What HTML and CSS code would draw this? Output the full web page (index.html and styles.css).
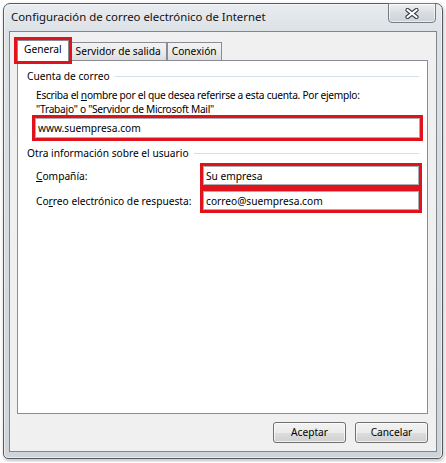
FILE: index.html
```html
<!DOCTYPE html>
<html lang="es">
<head>
  <meta charset="UTF-8" />
  <meta name="viewport" content="width=device-width, initial-scale=1.0" />
  <title>Configuración de correo electrónico de Internet</title>
  <link rel="stylesheet" href="styles.css">
</head>
<body>
  <div class="window">
    <div class="titlebar">
      <span class="title">Configuración de correo electrónico de Internet</span>
      <button class="close" aria-label="Cerrar">
        <svg width="14" height="11" viewBox="0 0 14 11">
          <path d="M2.5 2 L11.5 9 M11.5 2 L2.5 9" stroke="#3a3f45" stroke-width="4.2" stroke-linecap="round" fill="none"/>
          <path d="M2.5 2 L11.5 9 M11.5 2 L2.5 9" stroke="#fff" stroke-width="2.2" stroke-linecap="round" fill="none"/>
        </svg>
      </button>
    </div>

    <div class="client">
      <div class="tabs">
        <div class="tab active marked">General</div>
        <div class="tab">Servidor de salida</div>
        <div class="tab">Conexión</div>
      </div>

      <div class="panel">
        <div class="group-title"><span>Cuenta de correo</span></div>
        <p class="hint">Escriba el <u>n</u>ombre por el que desea referirse a esta cuenta. Por ejemplo:<br>"Trabajo" o "Servidor de Microsoft Mail"</p>
        <input class="field wide marked" type="text" value="www.suempresa.com" />

        <div class="group-title second"><span>Otra información sobre el usuario</span></div>
        <div class="row">
          <label><u>C</u>ompañía:</label>
          <input class="field marked" type="text" value="Su empresa" />
        </div>
        <div class="row">
          <label>Co<u>r</u>reo electrónico de respuesta:</label>
          <input class="field marked" type="text" value="correo@suempresa.com" />
        </div>
      </div>

      <div class="actions">
        <button class="btn">Aceptar</button>
        <button class="btn">Cancelar</button>
      </div>
    </div>
  </div>
</body>
</html>
```

FILE: styles.css
```css
body {
  margin: 0;
  padding: 3px;
  background: #fff;
  font-family: "Noto Sans", "Open Sans", sans-serif;
  font-size: 10.2px;
  color: #000;
}

.window {
  position: relative;
  width: 440px;
  height: 456px;
  box-sizing: border-box;
  display: flex;
  flex-direction: column;
  padding: 0 5px 6px;
  border: 1px solid #555a60;
  border-radius: 7px 7px 5px 5px;
  background: linear-gradient(to bottom, #e9ecf0 0, #dce1e6 28px, #cfd4d9 100%);
  box-shadow: inset 0 0 0 1px rgba(255, 255, 255, 0.55), 1px 2px 4px rgba(0, 0, 0, 0.25);
}

.titlebar {
  height: 27px;
  line-height: 25px;
  padding-left: 2px;
}

.title {
  font-size: 11.4px;
  color: #111;
}

.close {
  position: absolute;
  top: -1px;
  right: 6px;
  width: 48px;
  height: 20px;
  padding: 0;
  display: flex;
  align-items: center;
  justify-content: center;
  border: 1px solid #777c82;
  border-radius: 0 0 4px 4px;
  background: linear-gradient(to bottom, #eef0f2, #d9dde1 50%, #cdd2d7);
  box-shadow: inset 0 0 0 1px rgba(255, 255, 255, 0.6);
}

.client {
  flex: 1;
  display: flex;
  flex-direction: column;
  padding: 8px 8px 8px 7px;
  background: #f0f0f0;
  border: 1px solid #80868c;
}

.tabs {
  display: flex;
  align-items: flex-end;
  height: 20px;
}

.tab {
  height: 18px;
  box-sizing: border-box;
  padding: 0 5px;
  line-height: 17px;
  border: 1px solid #898c95;
  border-bottom: none;
  background: linear-gradient(to bottom, #f3f3f3, #ebebeb 50%, #dddddd);
  white-space: nowrap;
}

.tab:last-child {
  padding: 0 4px;
}

.tab.active {
  position: relative;
  z-index: 1;
  height: 21px;
  margin: 0 1px -1px 0;
  padding: 0 6px 3px;
  background: #fff;
}

.marked {
  outline: 3px solid #e0121c;
}

.panel {
  flex: 1;
  padding: 8px 6px 0 9px;
  background: #fff;
  border: 1px solid #898c95;
  line-height: 14px;
}

.group-title {
  display: flex;
  align-items: center;
  gap: 5px;
  margin-right: 2px;
  white-space: nowrap;
}

.group-title::after {
  content: "";
  flex: 1;
  height: 1px;
  background: #d5dfe5;
}

.group-title.second {
  margin-top: 8px;
}

.hint {
  margin: 5px 0 0;
  padding-left: 9px;
  white-space: nowrap;
  letter-spacing: -0.28px;
}

.field {
  display: block;
  box-sizing: border-box;
  height: 19px;
  margin: 0;
  padding: 0 2px;
  font: inherit;
  color: #000;
  border: 1px solid #abadb3;
  background: #fff;
}

.field.wide {
  width: 385px;
  height: 20px;
  margin: 2px 0 0 8px;
}

.row {
  display: flex;
  align-items: center;
  margin: 6px 2px 0 9px;
}

.row label {
  width: 167px;
  flex-shrink: 0;
}

.row .field {
  flex: 1;
  min-width: 0;
}

.actions {
  display: flex;
  justify-content: flex-end;
  gap: 9px;
  margin-top: 8px;
}

.btn {
  width: 73px;
  height: 21px;
  padding: 0;
  font: inherit;
  line-height: 19px;
  color: #000;
  border: 1px solid #707070;
  border-radius: 3px;
  background: linear-gradient(to bottom, #f2f2f2 0, #ebebeb 50%, #dddddd 51%, #cfcfcf 100%);
  box-shadow: inset 0 0 0 1px rgba(255, 255, 255, 0.7);
}
```
